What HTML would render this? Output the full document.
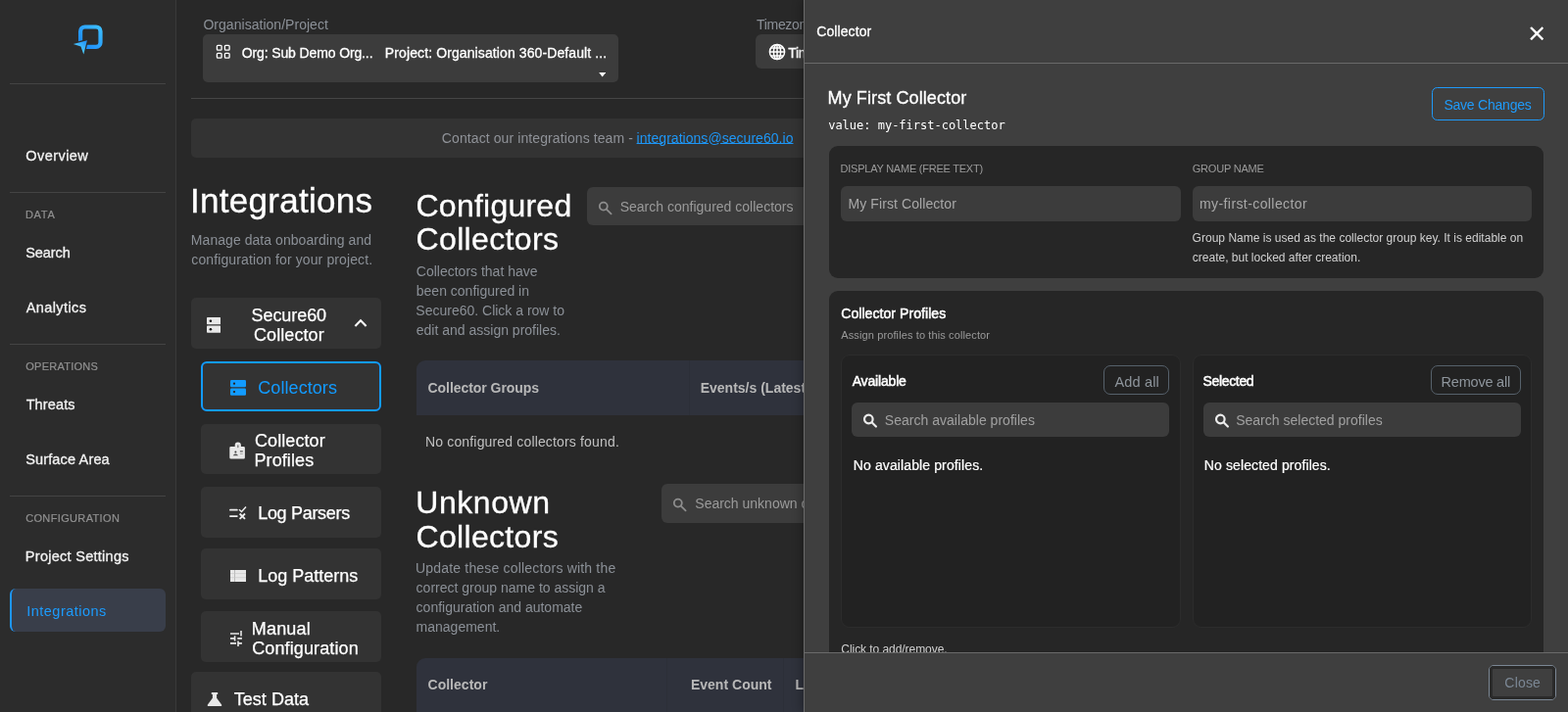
<!DOCTYPE html>
<html lang="en"><head><meta charset="utf-8"><title>Integrations</title>
<style>
*{box-sizing:border-box;margin:0;padding:0}
html,body{width:1600px;height:727px;overflow:hidden;background:#282828;color:#fff;font-family:"Liberation Sans",sans-serif;}
#main,#side,#modal{will-change:transform}
.a{position:absolute}
.t{position:absolute;white-space:nowrap}
#side{position:absolute;left:0;top:0;width:180px;height:727px;background:#2c2c2c;border-right:1px solid #393939}
.sep{position:absolute;left:10px;width:159px;height:1px;background:#444}
.btn{position:absolute;background:#333;border-radius:5px}
.fld{position:absolute;background:#3c3c3c;border-radius:6px}
#modal{position:absolute;left:820px;top:0;width:780px;height:727px;background:#3f3f3f;box-shadow:-3px 0 9px rgba(0,0,0,.24)}
.card{position:absolute;background:#262626;border-radius:9px}
.box{position:absolute;background:#222;border:1px solid #2c2c2c;border-radius:9px}
.ob{position:absolute;border:1px solid #56616b;border-radius:7px}
.th{position:absolute;background:#2f323c}
</style></head><body>
<div id="main">
  <div class="fld" style="left:207px;top:35px;width:424.200px;height:49.300px;border-radius:5px"></div>
  <svg class="a" style="left:220px;top:45px" width="16" height="16" viewBox="0 0 16 16" fill="none" stroke="#fff" stroke-width="1.3"><rect x="1.4" y="1.4" width="4.700" height="4.700" rx=".9"/><rect x="9.400" y="1.4" width="4.700" height="4.700" rx=".9"/><rect x="1.4" y="9.400" width="4.700" height="4.700" rx=".9"/><rect x="9.400" y="9.400" width="4.700" height="4.700" rx=".9"/></svg>
  <svg class="a" style="left:611px;top:74.4px" width="7.4" height="4.4" viewBox="0 0 8 5"><path d="M0 0h8L4 5z" fill="#fff"/></svg>
  <div class="fld" style="left:771.4px;top:35px;width:100px;height:35.3px"></div>
  <svg class="a" style="left:783.5px;top:44.3px" width="18" height="18" viewBox="0 0 18 18" fill="none" stroke="#fff" stroke-width="1.5"><circle cx="9" cy="9" r="7.6"/><ellipse cx="9" cy="9" rx="3.6" ry="7.6"/><path d="M1.4 9h15.2M2.6 5h12.8M2.6 13h12.8M9 1.4v15.2"/></svg>
  <div class="a" style="left:195px;top:99.5px;width:700px;height:1.5px;background:#464646"></div>
  <div class="a" style="left:195px;top:120.5px;width:700px;height:40px;background:#333;border-radius:5px"></div>

  <div class="btn" style="left:195px;top:304px;width:193.5px;height:52px"></div>
  <svg class="a" style="left:211px;top:324px" width="14.2" height="16" viewBox="0 0 14.2 16"><rect x="0" y="0" width="14.2" height="7.2" rx=".8" fill="#e8e8e8"/><rect x="0" y="8.6" width="14.2" height="7.2" rx=".8" fill="#e8e8e8"/><circle cx="3.9" cy="3.8" r="1.300" fill="#111"/><circle cx="3.9" cy="12.2" r="1.300" fill="#111"/></svg>
  <svg class="a" style="left:360.500px;top:325.300px" width="14" height="9" viewBox="0 0 14 9" fill="none" stroke="#fff" stroke-width="2.100"><path d="M1.400 7.900L7 2.300l5.600 5.600"/></svg>

  <div class="btn" style="left:205px;top:368.5px;width:183.500px;height:51.5px;border:2px solid #129bff;border-radius:6px"></div>
  <svg class="a" style="left:235px;top:388px" width="16" height="16" viewBox="0 0 16 16"><rect x="0" y="0" width="16" height="7.2" rx="1.2" fill="#129bff"/><rect x="0" y="8.6" width="16" height="7.2" rx="1.2" fill="#129bff"/><circle cx="4" cy="3.7" r="1.15" fill="#2a2320"/><circle cx="4" cy="12.1" r="1.15" fill="#2a2320"/></svg>

  <div class="btn" style="left:205px;top:432.8px;width:183.500px;height:51.4px"></div>
  <svg class="a" style="left:234px;top:450.5px" width="16.4" height="18" viewBox="0 0 16.4 18"><path d="M5.700 5V3.600a3.100 3.100 0 0 1 6.200 0V5h2.700a1.300 1.300 0 0 1 1.300 1.300v9.900a1.300 1.300 0 0 1-1.300 1.300H1.600a1.300 1.300 0 0 1-1.300-1.300V6.300A1.300 1.300 0 0 1 1.600 5z" fill="#e8e8e8"/><rect x="8" y="3.200" width="1.600" height="3" rx=".6" fill="#8a8a8a"/><circle cx="6.400" cy="10.400" r="1" fill="#3a3a3a"/><path d="M3.900 14.300c.3-1.200 1.400-1.700 2.500-1.700s2.200.5 2.500 1.700z" fill="#555"/><rect x="10.900" y="9.400" width="2.900" height="1" fill="#3a3a3a"/><rect x="10.900" y="11.900" width="2.900" height="1" fill="#aaa"/></svg>

  <div class="btn" style="left:205px;top:496.6px;width:183.500px;height:52px"></div>
  <svg class="a" style="left:233px;top:515px" width="20" height="16" viewBox="0 0 20 16" fill="none" stroke="#eee" stroke-width="1.7"><path d="M1.900 5.700h7M1.900 12.100h7" stroke-linecap="round"/><path d="M11 5.300l2.500 2.200 4.500-5" stroke-width="1.500"/><path d="M11.600 9.500l5.400 5.400M17 9.500l-5.400 5.400" stroke-width="1.800"/></svg>

  <div class="btn" style="left:205px;top:560.3px;width:183.500px;height:52px"></div>
  <svg class="a" style="left:235px;top:582px" width="16.300" height="12" viewBox="0 0 16.3 12"><rect width="16.300" height="12" fill="#e8e8e8"/><path d="M4.500 0v12" stroke="#8c8c8c" stroke-width=".5"/><path d="M0 3.600h16.300M0 7.700h16.300" stroke="#c4c4c4" stroke-width=".6"/></svg>

  <div class="btn" style="left:205px;top:624.3px;width:183.500px;height:52px"></div>
  <svg class="a" style="left:234px;top:643px" width="14" height="18" viewBox="0 0 14 18" fill="none" stroke="#e8e8e8" stroke-width="1.600"><path d="M1 4h9M12 1v5.600M1 8.900h5M5.600 6.200v5.400M8.300 8.900h4.600M1 13.900h6M9 11.400V17M9 13.900h3.900"/></svg>

  <div class="btn" style="left:195px;top:686.3px;width:193.5px;height:52px"></div>
  <svg class="a" style="left:211px;top:706px" width="16" height="16" viewBox="0 0 16 16"><path d="M4.800 .9h6.400v2h-1.100v3.800l5 6.700c.5.700.1 1.600-.8 1.600H1.700c-.9 0-1.300-.9-.8-1.600l5-6.700V2.900H4.800z" fill="#e8e8e8"/></svg>

  <div class="fld" style="left:599px;top:190.8px;width:300px;height:39.4px"></div>
  <svg class="a" style="left:610px;top:204.5px" width="16" height="16" viewBox="0 0 16 16" fill="none" stroke="#8d8d8d" stroke-width="1.800"><circle cx="5.800" cy="5.600" r="4"/><path d="M8.800 8.700l4.800 4.700" stroke-linecap="round"/></svg>
  <div class="th" style="left:424.8px;top:367.6px;width:500px;height:56.2px;border-radius:9px 0 0 0"></div>
  <div class="a" style="left:703px;top:367.6px;width:1px;height:56.200px;background:#2c2f38"></div>

  <div class="fld" style="left:675px;top:494.3px;width:300px;height:39.4px"></div>
  <svg class="a" style="left:686px;top:507.500px" width="16" height="16" viewBox="0 0 16 16" fill="none" stroke="#8d8d8d" stroke-width="1.800"><circle cx="5.800" cy="5.600" r="4"/><path d="M8.800 8.700l4.800 4.700" stroke-linecap="round"/></svg>
  <div class="th" style="left:424.8px;top:672px;width:500px;height:56px;border-radius:9px 0 0 0"></div>
  <div class="a" style="left:679.5px;top:672px;width:1px;height:56px;background:#2c2f38"></div>
  <div class="a" style="left:799px;top:672px;width:1px;height:56px;background:#2c2f38"></div>
<div class="t" style="left:207.44px;top:16.4px;font-size:14px;line-height:18px;color:#8b9097;letter-spacing:0.030px;">Organisation/Project</div>
<div class="t" style="left:246.72px;top:44.7px;font-size:14px;line-height:18px;color:#fff;letter-spacing:-0.124px;-webkit-text-stroke:.3px #fff;">Org: Sub Demo Org...</div>
<div class="t" style="left:392.87px;top:44.7px;font-size:14px;line-height:18px;color:#fff;letter-spacing:0.105px;-webkit-text-stroke:.3px #fff;">Project: Organisation 360-Default ...</div>
<div class="t" style="left:772.00px;top:16.4px;font-size:14px;line-height:18px;color:#8b9097;letter-spacing:-0.309px;">Timezone</div>
<div class="t" style="left:804.30px;top:44.7px;font-size:14px;line-height:18px;color:#fff;letter-spacing:-0.352px;-webkit-text-stroke:.3px #fff;">Timezone</div>
<div class="t" style="left:450.80px;top:131.7px;font-size:14px;line-height:18px;color:#8f9298;letter-spacing:0.097px;white-space:pre;">Contact our integrations team - </div>
<div class="t" style="left:649.58px;top:131.7px;font-size:14px;line-height:18px;color:#1e96f5;letter-spacing:0.038px;text-decoration:underline;text-underline-offset:0px;">integrations@secure60.io</div>
<div class="t" style="left:193.92px;top:181.5px;font-size:35px;line-height:46px;color:#fff;letter-spacing:0.287px;-webkit-text-stroke:.35px #fff;">Integrations</div>
<div class="t" style="left:194.85px;top:236.1px;font-size:14px;line-height:18px;color:#8b9097;letter-spacing:0.050px;">Manage data onboarding and</div>
<div class="t" style="left:195.29px;top:256.1px;font-size:14px;line-height:18px;color:#8b9097;letter-spacing:0.118px;">configuration for your project.</div>
<div class="t" style="left:256.59px;top:310.5px;font-size:18px;line-height:23px;color:#fff;letter-spacing:-0.080px;-webkit-text-stroke:.25px #fff;">Secure60</div>
<div class="t" style="left:259.03px;top:330.5px;font-size:18px;line-height:23px;color:#fff;letter-spacing:0.079px;-webkit-text-stroke:.25px #fff;">Collector</div>
<div class="t" style="left:263.29px;top:384.6px;font-size:18px;line-height:23px;color:#129bff;letter-spacing:0.066px;">Collectors</div>
<div class="t" style="left:260.03px;top:438.6px;font-size:18px;line-height:23px;color:#fff;letter-spacing:0.079px;-webkit-text-stroke:.25px #fff;">Collector</div>
<div class="t" style="left:259.46px;top:458.6px;font-size:18px;line-height:23px;color:#fff;letter-spacing:0.100px;-webkit-text-stroke:.25px #fff;">Profiles</div>
<div class="t" style="left:263.22px;top:513.1px;font-size:18px;line-height:23px;color:#fff;letter-spacing:-0.309px;-webkit-text-stroke:.25px #fff;">Log Parsers</div>
<div class="t" style="left:263.22px;top:577.1px;font-size:18px;line-height:23px;color:#fff;letter-spacing:-0.010px;-webkit-text-stroke:.25px #fff;">Log Patterns</div>
<div class="t" style="left:256.80px;top:630.6px;font-size:18px;line-height:23px;color:#fff;letter-spacing:0.162px;-webkit-text-stroke:.25px #fff;">Manual</div>
<div class="t" style="left:257.28px;top:650.6px;font-size:18px;line-height:23px;color:#fff;letter-spacing:0.109px;-webkit-text-stroke:.25px #fff;">Configuration</div>
<div class="t" style="left:238.71px;top:702.6px;font-size:18px;line-height:23px;color:#fff;letter-spacing:0.036px;-webkit-text-stroke:.25px #fff;">Test Data</div>
<div class="t" style="left:424.53px;top:188.8px;font-size:32px;line-height:42px;color:#fff;letter-spacing:0.237px;-webkit-text-stroke:.3px #fff;">Configured</div>
<div class="t" style="left:424.53px;top:223.2px;font-size:32px;line-height:42px;color:#fff;letter-spacing:0.354px;-webkit-text-stroke:.3px #fff;">Collectors</div>
<div class="t" style="left:424.80px;top:267.9px;font-size:14px;line-height:18px;color:#8b9097;letter-spacing:0.000px;">Collectors that have</div>
<div class="t" style="left:424.80px;top:287.7px;font-size:14px;line-height:18px;color:#8b9097;letter-spacing:0.000px;">been configured in</div>
<div class="t" style="left:424.37px;top:307.6px;font-size:14px;line-height:18px;color:#8b9097;letter-spacing:-0.002px;">Secure60. Click a row to</div>
<div class="t" style="left:424.80px;top:327.5px;font-size:14px;line-height:18px;color:#8b9097;letter-spacing:0.000px;">edit and assign profiles.</div>
<div class="t" style="left:632.70px;top:201.8px;font-size:14px;line-height:18px;color:#9a9a9a;letter-spacing:0.006px;">Search configured collectors</div>
<div class="t" style="left:436.56px;top:387.0px;font-size:14px;line-height:18px;color:#b8b8b8;letter-spacing:-0.050px;font-weight:700;">Collector Groups</div>
<div class="t" style="left:714.70px;top:387.0px;font-size:14px;line-height:18px;color:#b8b8b8;letter-spacing:0.000px;font-weight:700;">Events/s (Latest)</div>
<div class="t" style="left:434.01px;top:442.1px;font-size:14px;line-height:18px;color:#c0c0c0;letter-spacing:0.159px;">No configured collectors found.</div>
<div class="t" style="left:424.24px;top:491.8px;font-size:32px;line-height:42px;color:#fff;letter-spacing:0.556px;-webkit-text-stroke:.3px #fff;">Unknown</div>
<div class="t" style="left:424.57px;top:526.7px;font-size:32px;line-height:42px;color:#fff;letter-spacing:0.314px;-webkit-text-stroke:.3px #fff;">Collectors</div>
<div class="t" style="left:423.97px;top:570.8px;font-size:14px;line-height:18px;color:#8b9097;letter-spacing:0.187px;">Update these collectors with the</div>
<div class="t" style="left:424.60px;top:590.8px;font-size:14px;line-height:18px;color:#8b9097;letter-spacing:0.000px;">correct group name to assign a</div>
<div class="t" style="left:424.60px;top:610.6px;font-size:14px;line-height:18px;color:#8b9097;letter-spacing:0.000px;">configuration and automate</div>
<div class="t" style="left:424.60px;top:630.6px;font-size:14px;line-height:18px;color:#8b9097;letter-spacing:0.000px;">management.</div>
<div class="t" style="left:709.30px;top:504.8px;font-size:14px;line-height:18px;color:#9a9a9a;letter-spacing:0.000px;">Search unknown collectors</div>
<div class="t" style="left:436.51px;top:689.7px;font-size:14px;line-height:18px;color:#b8b8b8;letter-spacing:0.024px;font-weight:700;">Collector</div>
<div class="t" style="left:704.91px;top:689.7px;font-size:14px;line-height:18px;color:#b8b8b8;letter-spacing:0.018px;font-weight:700;">Event Count</div>
<div class="t" style="left:811.50px;top:689.7px;font-size:14px;line-height:18px;color:#b8b8b8;letter-spacing:0.000px;font-weight:700;">Last Seen</div>
</div>

<div id="side">
  <svg class="a" style="left:70px;top:20px" width="40" height="40" viewBox="70 20 40 40">
    <defs>
      <linearGradient id="lg1" x1="104" y1="26" x2="80" y2="50" gradientUnits="userSpaceOnUse"><stop offset="0" stop-color="#3fc2ff"/><stop offset="1" stop-color="#1680f6"/></linearGradient>
      <linearGradient id="lg2" x1="89" y1="41" x2="80" y2="52" gradientUnits="userSpaceOnUse"><stop offset="0" stop-color="#1e8af7"/><stop offset="1" stop-color="#4fd0ff"/></linearGradient>
      <mask id="mk"><rect x="70" y="20" width="40" height="40" fill="#fff"/><path d="M74.800 45L88.900 41.200 85.300 55.600 82.500 47.400z" fill="#000" stroke="#000" stroke-width="2.400" stroke-linejoin="miter"/></mask>
    </defs>
    <rect x="82.100" y="27.500" width="20.400" height="20.400" rx="4.500" fill="none" stroke="url(#lg1)" stroke-width="4.200" mask="url(#mk)"/>
    <path d="M74.800 45L88.900 41.200 85.300 55.600 82.500 47.400z" fill="url(#lg2)"/>
  </svg>
  <div class="sep" style="top:85px"></div>
  <div class="sep" style="top:196px"></div>
  <div class="sep" style="top:351px"></div>
  <div class="sep" style="top:506px"></div>
  <div class="a" style="left:10px;top:601px;width:159px;height:43.700px;background:#393e4a;border-radius:6px;border-left:2px solid #1e96f5"></div>
<div class="t" style="left:26.20px;top:149.5px;font-size:14.5px;line-height:19px;color:#f2f2f2;letter-spacing:0.459px;-webkit-text-stroke:.3px #f2f2f2;">Overview</div>
<div class="t" style="left:25.88px;top:212.0px;font-size:11px;line-height:14px;color:#909090;letter-spacing:0.721px;-webkit-text-stroke:.2px #909090;">DATA</div>
<div class="t" style="left:26.15px;top:248.5px;font-size:14.5px;line-height:19px;color:#f2f2f2;letter-spacing:-0.047px;-webkit-text-stroke:.3px #f2f2f2;">Search</div>
<div class="t" style="left:26.75px;top:304.7px;font-size:14.5px;line-height:19px;color:#f2f2f2;letter-spacing:0.390px;-webkit-text-stroke:.3px #f2f2f2;">Analytics</div>
<div class="t" style="left:26.25px;top:366.9px;font-size:11px;line-height:14px;color:#909090;letter-spacing:0.259px;-webkit-text-stroke:.2px #909090;">OPERATIONS</div>
<div class="t" style="left:26.64px;top:403.6px;font-size:14.5px;line-height:19px;color:#f2f2f2;letter-spacing:0.136px;-webkit-text-stroke:.3px #f2f2f2;">Threats</div>
<div class="t" style="left:26.15px;top:459.5px;font-size:14.5px;line-height:19px;color:#f2f2f2;letter-spacing:0.155px;-webkit-text-stroke:.3px #f2f2f2;">Surface Area</div>
<div class="t" style="left:26.16px;top:522.0px;font-size:11px;line-height:14px;color:#909090;letter-spacing:0.353px;-webkit-text-stroke:.2px #909090;">CONFIGURATION</div>
<div class="t" style="left:25.83px;top:558.5px;font-size:14.5px;line-height:19px;color:#f2f2f2;letter-spacing:0.275px;-webkit-text-stroke:.3px #f2f2f2;">Project Settings</div>
<div class="t" style="left:27.26px;top:614.5px;font-size:14.5px;line-height:19px;color:#1c9bfc;letter-spacing:0.477px;">Integrations</div>
</div>

<div id="modal">
  <div class="card" style="left:26px;top:149px;width:729px;height:134.800px"></div>
  <div class="fld" style="left:38px;top:189.500px;width:346.600px;height:36px"></div>
  <div class="fld" style="left:396.700px;top:189.500px;width:346.300px;height:36px"></div>

  <div class="card" style="left:26px;top:297.300px;width:729px;height:420px"></div>
  <div class="box" style="left:38px;top:361.500px;width:346.500px;height:279px"></div>
  <div class="box" style="left:396.700px;top:361.500px;width:346.300px;height:279px"></div>
  <div class="ob" style="left:305.800px;top:372.500px;width:67.600px;height:30px"></div>
  <div class="ob" style="left:640px;top:372.500px;width:92.300px;height:30px"></div>
  <div class="fld" style="left:49px;top:410.600px;width:324.400px;height:35.700px"></div>
  <div class="fld" style="left:407.500px;top:410.600px;width:324.700px;height:35.700px"></div>
  <svg class="a" style="left:60px;top:421.500px" width="16" height="16" viewBox="0 0 16 16" fill="none" stroke="#ececec" stroke-width="2.200"><circle cx="6.300" cy="6" r="4.300"/><path d="M9.600 9.300l4.300 4.200" stroke-linecap="round"/></svg>
  <svg class="a" style="left:418.500px;top:421.500px" width="16" height="16" viewBox="0 0 16 16" fill="none" stroke="#ececec" stroke-width="2.200"><circle cx="6.300" cy="6" r="4.300"/><path d="M9.600 9.300l4.300 4.200" stroke-linecap="round"/></svg>
<div class="t" style="left:38.30px;top:654.8px;font-size:12px;line-height:16px;color:#d0d0d0;letter-spacing:-0.055px;">Click to add/remove.</div>
  <div class="a" style="left:0;top:0;width:781px;height:64.700px;background:#3f3f3f;border-bottom:1px solid #6a6a6a"></div>
  <svg class="a" style="left:741px;top:26.800px" width="14.400" height="14.400" viewBox="0 0 14 14" stroke="#fff" stroke-width="2.300"><path d="M1 1l12 12M13 1L1 13"/></svg>
  <div class="a" style="left:641px;top:89.200px;width:115px;height:34.300px;border:1px solid #1f99f8;border-radius:5.500px"></div>
  <div class="a" style="left:0;top:665.800px;width:781px;height:62px;background:#3f3f3f;border-top:1px solid #6a6a6a"></div>
  <div class="a" style="left:699.200px;top:678.800px;width:68.800px;height:36px;border:1px solid #7b8794;border-radius:5px"></div>
  <div class="a" style="left:700.200px;top:679.800px;width:66.800px;height:34px;border:3px solid #2a2a2a;border-radius:4px"></div>
<div class="t" style="left:13.30px;top:23.3px;font-size:14px;line-height:18px;color:#fff;letter-spacing:0.077px;-webkit-text-stroke:.3px #fff;">Collector</div>
<div class="t" style="left:24.57px;top:88.8px;font-size:18px;line-height:23px;color:#fff;letter-spacing:0.098px;-webkit-text-stroke:.3px #fff;">My First Collector</div>
<div class="t" style="left:25.16px;top:119.9px;font-size:12px;line-height:16px;color:#fff;letter-spacing:-0.005px;font-family:'DejaVu Sans Mono','Liberation Mono',monospace;">value: my-first-collector</div>
<div class="t" style="left:653.43px;top:97.6px;font-size:14px;line-height:18px;color:#1f9bfa;letter-spacing:-0.229px;">Save Changes</div>
<div class="t" style="left:37.54px;top:164.7px;font-size:11px;line-height:14px;color:#9a9a9a;letter-spacing:-0.235px;">DISPLAY NAME (FREE TEXT)</div>
<div class="t" style="left:396.75px;top:164.7px;font-size:11px;line-height:14px;color:#9a9a9a;letter-spacing:-0.205px;">GROUP NAME</div>
<div class="t" style="left:45.59px;top:199.3px;font-size:14px;line-height:18px;color:#a8a8a8;letter-spacing:0.079px;">My First Collector</div>
<div class="t" style="left:404.01px;top:199.3px;font-size:14px;line-height:18px;color:#a8a8a8;letter-spacing:0.411px;">my-first-collector</div>
<div class="t" style="left:396.62px;top:234.8px;font-size:12px;line-height:16px;color:#d0d0d0;letter-spacing:0.015px;">Group Name is used as the collector group key. It is editable on</div>
<div class="t" style="left:396.80px;top:254.8px;font-size:12px;line-height:16px;color:#d0d0d0;letter-spacing:0.000px;">create, but locked after creation.</div>
<div class="t" style="left:38.21px;top:311.1px;font-size:14px;line-height:18px;color:#fff;letter-spacing:0.068px;-webkit-text-stroke:.5px #fff;">Collector Profiles</div>
<div class="t" style="left:38.24px;top:334.8px;font-size:11px;line-height:14px;color:#9a9a9a;letter-spacing:0.119px;">Assign profiles to this collector</div>
<div class="t" style="left:49.67px;top:379.8px;font-size:14px;line-height:18px;color:#fff;letter-spacing:-0.168px;-webkit-text-stroke:.5px #fff;">Available</div>
<div class="t" style="left:407.42px;top:379.8px;font-size:14px;line-height:18px;color:#fff;letter-spacing:-0.323px;-webkit-text-stroke:.5px #fff;">Selected</div>
<div class="t" style="left:317.48px;top:380.6px;font-size:14.5px;line-height:19px;color:#8e959c;letter-spacing:0.164px;">Add all</div>
<div class="t" style="left:650.54px;top:380.6px;font-size:14.5px;line-height:19px;color:#8e959c;letter-spacing:-0.208px;">Remove all</div>
<div class="t" style="left:82.85px;top:420.1px;font-size:14px;line-height:18px;color:#a0a0a0;letter-spacing:0.021px;">Search available profiles</div>
<div class="t" style="left:441.21px;top:420.1px;font-size:14px;line-height:18px;color:#a0a0a0;letter-spacing:0.003px;">Search selected profiles</div>
<div class="t" style="left:50.78px;top:466.1px;font-size:14px;line-height:18px;color:#fff;letter-spacing:0.115px;-webkit-text-stroke:.2px #fff;">No available profiles.</div>
<div class="t" style="left:408.85px;top:466.1px;font-size:14px;line-height:18px;color:#fff;letter-spacing:0.102px;-webkit-text-stroke:.2px #fff;">No selected profiles.</div>
<div class="t" style="left:715.33px;top:688.0px;font-size:14px;line-height:18px;color:#7b8794;letter-spacing:0.194px;">Close</div>
  <div class="a" style="left:0;top:0;width:1px;height:727px;background:#6a6a6a"></div>
</div>
</body></html>
